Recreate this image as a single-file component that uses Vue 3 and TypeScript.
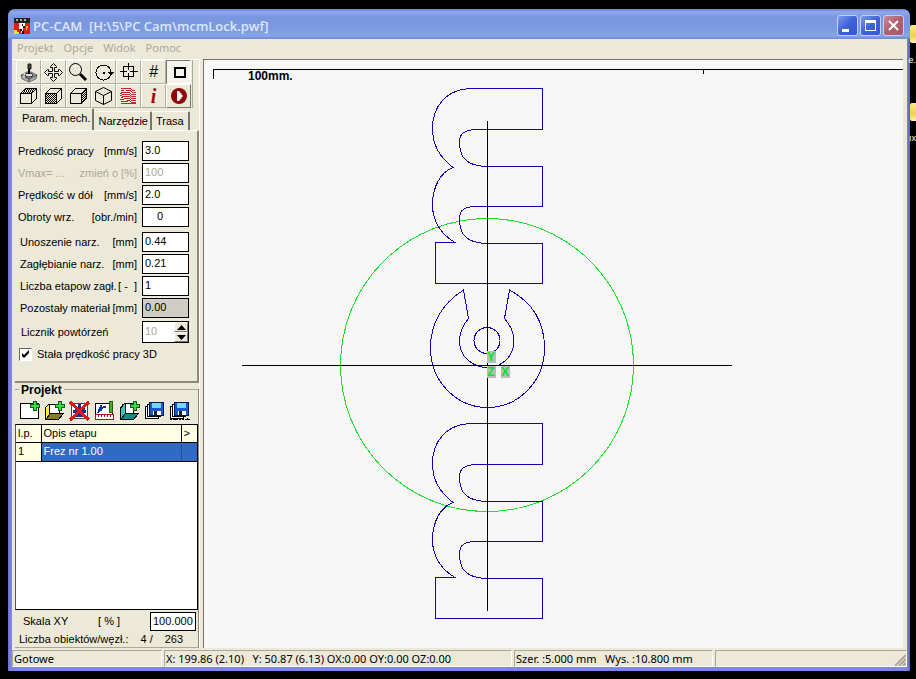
<script setup lang="ts">
import { ref } from 'vue'

interface Field {
  id: string
  label: string
  unit: string
  value: string
  state?: 'off' | 'locked'
  gap?: boolean
  centered?: boolean
}

const menus = ['Projekt', 'Opcje', 'Widok', 'Pomoc']
const tabs = ['Param. mech.', 'Narzędzie', 'Trasa']
const activeTab = ref(0)

const fields = ref<Field[]>([
  { id: 'work', label: 'Predkość pracy', unit: '[mm/s]', value: '3.0' },
  { id: 'vmax', label: 'Vmax= ...', unit: 'zmień o [%]', value: '100', state: 'off' },
  { id: 'down', label: 'Prędkość w dół', unit: '[mm/s]', value: '2.0' },
  { id: 'spin', label: 'Obroty wrz.', unit: '[obr./min]', value: '0', centered: true },
  { id: 'lift', label: 'Unoszenie narz.', unit: '[mm]', value: '0.44', gap: true },
  { id: 'sink', label: 'Zagłębianie narz.', unit: '[mm]', value: '0.21' },
  { id: 'steps', label: 'Liczba etapow zagł.', unit: '[ -  ]', value: '1' },
  { id: 'left', label: 'Pozostały materiał', unit: '[mm]', value: '0.00', state: 'locked' },
])
const repeats = ref(10)
const constantSpeed = ref(true)
const scale = ref('100.000')

const tools = [
  'Joystick', 'Przesuń', 'Lupa', 'Obrót', 'Centruj', 'Siatka', 'Obszar',
  'Widok z góry', 'Widok z przodu', 'Widok z boku', 'Izometria', 'Ścieżki', 'Informacje', 'Start',
]
const projectTools = ['Nowy', 'Otwórz', 'Usuń', 'Edytuj', 'Dodaj', 'Zapisz', 'Zapisz jako']

const letterM =
  'M542.5 88.5H473C445 88.5 432.5 108 432.5 128C432.5 146 440 157 453 167.5C441 172 432.5 186 432.5 205C432.5 222 442 235 455 242.5H435.5V283.5H542.5V243.5H487C468 243 459.5 236 459.5 219C459.5 209 465 206.5 478 206.5H542.5V166.5H487C468 166 459.5 159 459.5 142C459.5 132 467 129.5 478 129.5H542.5Z'
const letterC =
  'M463.5 290C448 300 430.5 318 430.5 348C430.5 382 457 407.5 487.5 407.5C518 407.5 544.5 382 544.5 348C544.5 318 528 300 509.5 290L504.5 318.5C510 325 514 333 514 341C514 356 502 367.5 487.5 367.5C472 367.5 459.5 356 459.5 341C459.5 333 463 325 468.5 318.5Z'
</script>

<template>
  <div class="desktop">
    <div class="shortcut first"><span class="folder"></span><span>e.</span></div>
    <div class="shortcut second"><span class="folder"></span><span>ıx</span></div>

    <main class="window">
      <header class="titlebar">
        <svg class="appicon" width="16" height="16" shape-rendering="crispEdges">
          <rect width="16" height="16" fill="#e81a10" />
          <rect width="16" height="5" fill="#222" />
          <path d="M2 1h2v2H2zM6 1h2v2H6zM10 1h2v2h-2z" fill="#aaa" />
          <path d="M5 5h6v4H9v6H7v-4H5z" fill="#fff" />
          <path d="M8 6h1v2H8zM9 8h2v2H9zM6 11h2v2H6zM8 13h2v3H8z" fill="#111" />
          <path d="M0 12h3v2h2v2H0z" fill="#ffe020" />
          <path d="M12 8h2v2h-1v2h-1z" fill="#ffb030" />
        </svg>
        <h1>PC-CAM&nbsp; [H:\5\PC Cam\mcmLock.pwf]</h1>
        <div class="winbuttons">
          <button aria-label="Minimalizuj"><svg width="19" height="19"><path d="M4 13h7v3H4z" fill="#fff" /></svg></button>
          <button aria-label="Maksymalizuj"><svg width="19" height="19" shape-rendering="crispEdges"><path d="M4 4h11v11H4zM5 7v7h9V7z" fill="#fff" fill-rule="evenodd" /></svg></button>
          <button class="close" aria-label="Zamknij"><svg width="19" height="19"><path d="M5 5l9 9M14 5l-9 9" stroke="#fff" stroke-width="2" /></svg></button>
        </div>
      </header>

      <nav class="menubar">
        <button v-for="m in menus" :key="m">{{ m }}</button>
      </nav>

      <div class="content">
        <aside class="sidebar">
          <div class="toolbar">
            <button v-for="(t, i) in tools" :key="t" :aria-label="t" :class="{ pressed: i === 6, held: i === 13 }">
              <span v-if="i === 5" class="hash">#</span>
              <span v-else-if="i === 12" class="info">i</span>
              <svg v-else width="23" height="22" fill="none" stroke="#000">
                <g v-if="i === 0">
                  <path d="M4 14l8-4 8 4-1 4-7 3-7-3z" fill="#aaa" stroke="#777" />
                  <path d="M4 14l8 4 8-4M12 18v3" stroke="#444" />
                  <ellipse cx="12" cy="14" rx="4" ry="2" fill="#ddd" stroke="#222" />
                  <path d="M12 13V7" stroke-width="2" />
                  <path d="M11 3h3v5h-3z" fill="#444" stroke="#222" />
                  <path d="M7 12l1 2M6 15l2 1" stroke="#fff" />
                </g>
                <path v-else-if="i === 1" d="M11.5 2.5l3 3v1h-2v4h4v-2h1l3 3-3 3h-1v-2h-4v4h2v1l-3 3-3-3v-1h2v-4h-4v2h-1l-3-3 3-3h1v2h4v-4h-2v-1z" />
                <g v-else-if="i === 2">
                  <circle cx="8.500" cy="8.500" r="6" />
                  <path d="M5 8q1-3 4-3" stroke="#fff" />
                  <path d="M13 13l6 6" stroke-width="3" />
                </g>
                <g v-else-if="i === 3" shape-rendering="crispEdges">
                  <circle cx="11.500" cy="11.500" r="7.500" />
                  <path d="M11 11h2v2h-2z" fill="#000" stroke="none" />
                  <path d="M16 11h6l-3 4z" fill="#000" stroke="none" />
                </g>
                <g v-else-if="i === 4" shape-rendering="crispEdges">
                  <rect x="6.500" y="5.500" width="10" height="10" />
                  <path d="M11.500 2v7M11.500 12v7M3 10.500h7M13 10.500h8" />
                </g>
                <rect v-else-if="i === 6" x="8" y="7" width="10" height="9" stroke-width="2" shape-rendering="crispEdges" />
                <g v-else-if="i >= 7 && i <= 9" shape-rendering="crispEdges">
                  <path v-if="i === 7" d="M7 6.500h10M8 4.500h10M6 7.500h10M7 5.500h10" stroke-dasharray="1 1" />
                  <path v-if="i === 8" d="M4 9.500h10M5 10.500h9M4 11.500h10M5 12.500h9M4 13.500h10M5 14.500h9M4 15.500h10M5 16.500h9M4 17.500h10" stroke-dasharray="1 1" />
                  <path v-if="i === 9" d="M15.500 8v10M16.500 7v10M17.500 6v10M18.500 5v10" stroke-dasharray="1 1" />
                  <path d="M3.500 8.500h11v10h-11zM3.500 8.500l5-5h11l-5 5M19.500 3.500v10l-5 5" />
                </g>
                <path v-else-if="i === 10" d="M11.500 2.500l8 4v9l-8 4-8-4v-9zM3.500 6.500l8 4 8-4M11.500 10.500v9" />
                <g v-else-if="i === 11" stroke="#c0282c" shape-rendering="crispEdges">
                  <path d="M4 3.500h9l3 2h2M4 5.500h3M9 5.500h4l3 2h3M3 8.500l3-1h6l3 2h4M3 10.500l4-1h5l3 2h4M4 12.500l3-1h5l3 2h4M3 14.500h3l2-1h4l3 2h4M4 16.500h5l3-1 3 2h4M4 18.500h15" />
                </g>
                <g v-else-if="i === 13">
                  <circle cx="12" cy="11" r="8" fill="#8e0808" stroke="none" />
                  <path d="M10 6h2l4 5-4 5h-2z" fill="#fff" stroke="none" />
                </g>
              </svg>
            </button>
          </div>

          <div class="tabs" role="tablist">
            <button v-for="(t, i) in tabs" :key="t" role="tab" :aria-selected="i === activeTab" :class="{ active: i === activeTab }" @click="activeTab = i">{{ t }}</button>
          </div>

          <section class="tabpage">
            <div v-for="(f, i) in fields" :key="f.id" class="row" :class="[f.state, { gap: f.gap, indent: i > 3 }]">
              <label :for="f.id">{{ f.label }}</label>
              <span class="unit">{{ f.unit }}</span>
              <input :id="f.id" v-model="f.value" type="text" :disabled="f.state === 'off'" :readonly="f.state === 'locked'" :class="{ centered: f.centered }" />
            </div>
            <div class="row off repeat">
              <label for="repeat">Licznik powtórzeń</label>
              <div class="spinner">
                <input id="repeat" :value="repeats" type="text" disabled />
                <div class="arrows">
                  <button aria-label="Więcej" @click="repeats++"><svg width="9" height="5"><path d="M0 5l4.500-5 4.500 5z" /></svg></button>
                  <button aria-label="Mniej" @click="repeats--"><svg width="9" height="5"><path d="M0 0h9l-4.500 5z" /></svg></button>
                </div>
              </div>
            </div>
            <label class="check">
              <input v-model="constantSpeed" type="checkbox" />
              <svg width="11" height="11"><path v-if="constantSpeed" d="M2 4v3l2 2 5-5V1L4 6z" /></svg>
              <span>Stała prędkość pracy 3D</span>
            </label>
          </section>

          <section class="project">
            <h2>Projekt</h2>
            <div class="ptools">
              <button v-for="(t, i) in projectTools" :key="t" :aria-label="t">
                <svg width="21" height="22" stroke="#000" fill="none" shape-rendering="crispEdges">
                  <path v-if="i === 0" d="M1.500 3.500h18v15h-18z" fill="#fff" />
                  <g v-else-if="i === 1">
                    <path d="M1.500 19.500v-12l3-3h8v13z" fill="#ffe650" />
                    <path d="M5.500 4.500h10v12h-10z" fill="#fff" />
                    <path d="M1.500 19.500l5-6h13l-5 6z" fill="#84801a" />
                  </g>
                  <g v-else-if="i === 2">
                    <path d="M2.500 3.500h16v15h-16z" fill="#fff" stroke="#444" />
                    <path d="M9 4h3v3h4v3h1v3h-3v4H7v-4H4v-3h2V7h3z" fill="#1d2d98" stroke="none" />
                    <path d="M1 2l19 18M20 2L1 20" stroke="#e01818" stroke-width="3" />
                  </g>
                  <g v-else-if="i === 3">
                    <path d="M1.500 3.500h17v11h-17z" fill="#fff" />
                    <path d="M4 13l2-5 6-1M7 5v6" stroke="#1530b0" stroke-width="2" />
                    <path d="M15 1h3v11h-3z" fill="#48b020" stroke="#286010" />
                    <path d="M1.500 14.500h18v5h-18z" fill="#fff" stroke="#a01818" />
                    <path d="M4.500 15v2M7.500 15v2M10.500 15v2M13.500 15v2M16.500 15v2" stroke="#a01818" />
                  </g>
                  <g v-else-if="i === 4">
                    <path d="M1.500 19.500v-12l2-1V5l3-2h7v14z" fill="#38c8c0" />
                    <path d="M6.500 3.500h8v13h-8z" fill="#fff" />
                    <path d="M1.500 19.500l5-6h13l-5 6z" fill="#108c90" />
                  </g>
                  <g v-else>
                    <path d="M1.500 6.500h13v12h-13z" fill="#fff" />
                    <path d="M3.500 4.500h13v12h-13z" fill="#fff" />
                    <path d="M5.500 2.500h14v13h-14z" fill="#1858d0" stroke="#08184c" />
                    <path d="M8 3h9v5H8z" fill="#78d4ff" stroke="none" />
                    <path d="M9 11h8v4H9z" fill="#fff" stroke="none" />
                    <path d="M10 11h3v4h-3z" fill="#123" stroke="none" />
                    <path v-if="i === 6" d="M1 19.500h20M2.500 18v3M6.500 18v3M10.500 18v3M14.500 18v3M18.500 18v3" stroke-dasharray="2 1" />
                  </g>
                  <path v-if="[0, 1, 4].includes(i)" d="M14 1h4v3h3v4h-3v3h-4V8h-3V4h3z" fill="#0a5a1a" stroke="none" />
                  <path v-if="[0, 1, 4].includes(i)" d="M15 2h2v3h3v2h-3v3h-2V7h-3V5h3z" fill="#30e040" stroke="none" />
                </svg>
              </button>
            </div>
            <div class="list">
              <table>
                <thead>
                  <tr><th class="num">l.p.</th><th>Opis etapu</th><th class="more">&gt;</th></tr>
                </thead>
                <tbody>
                  <tr><td class="num">1</td><td>Frez nr 1.00</td><td class="more"></td></tr>
                </tbody>
              </table>
            </div>
            <div class="scale">
              <label for="scale">Skala XY</label>
              <span>[ % ]</span>
              <input id="scale" v-model="scale" type="text" />
            </div>
            <div class="count"><span>Liczba obiektów/węzł.:</span><span>4 /</span><span>263</span></div>
          </section>
        </aside>

        <section class="canvas">
          <svg width="100%" height="100%" fill="none">
            <path d="M9.500 19V9.500M499.500 9v5" stroke="#000" />
            <line x1="9" y1="9.500" x2="100%" y2="9.500" stroke="#000" />
            <text x="44" y="20" class="ruler">100mm.</text>
            <g transform="translate(-204 -60)" shape-rendering="crispEdges">
              <circle cx="487" cy="365" r="146.500" stroke="#1fdc2c" />
              <g stroke="#1400b4">
                <path :d="letterM" />
                <path :d="letterC" />
                <path :d="letterM" transform="translate(0 335)" />
                <circle cx="487" cy="340.500" r="13" />
              </g>
              <path d="M242 365.500h490M487.500 121v490" stroke="#000" />
              <path d="M487 351h9v12h-9zM487 366h9v12h-9zM501 366h9v12h-9z" fill="#bcbcbc" />
              <g class="axis">
                <text x="491" y="361">Y</text>
                <text x="491" y="376">Z</text>
                <text x="505" y="376">X</text>
              </g>
            </g>
          </svg>
        </section>
      </div>

      <footer class="status">
        <div class="ready">Gotowe</div>
        <div class="coords">X: 199.86 (2.10)&nbsp;&nbsp; Y: 50.87 (6.13) OX:0.00 OY:0.00 OZ:0.00</div>
        <div class="size">Szer. :5.000 mm&nbsp;&nbsp; Wys. :10.800 mm</div>
        <div class="rest">
          <svg width="12" height="12" stroke="#aaa690" stroke-width="2"><path d="M1 12L12 1M5 12l7-7M9 12l3-3" /></svg>
        </div>
      </footer>
    </main>
  </div>
</template>

<style>
body {
  background: #000;
}
</style>

<style scoped>
* {
  box-sizing: border-box;
}
.desktop {
  position: relative;
  display: flex;
  min-height: 100vh;
  padding: 9px 6px 8px 8px;
  overflow: hidden;
  background: #000;
  color: #000;
  font: 11px/14px "Liberation Sans", Arial, sans-serif;
}
button,
input {
  margin: 0;
  padding: 0;
  border: 0;
  background: none;
  color: inherit;
  font: inherit;
}
button svg {
  display: block;
}
.shortcut {
  position: absolute;
  right: 0;
  display: flex;
  flex-direction: column;
  align-items: flex-end;
  gap: 10px;
  color: #fff;
  font-size: 9px;
}
.shortcut.first {
  top: 25px;
}
.shortcut.second {
  top: 103px;
}
.folder {
  width: 6px;
  height: 18px;
  border-radius: 2px 0 0 2px;
  background: linear-gradient(#ffe98a, #f3cf52 60%, #fff3b0);
}
.window {
  display: flex;
  flex: 1;
  flex-direction: column;
  min-width: 0;
  padding: 0 3px 4px 4px;
  border-radius: 7px 7px 0 0;
  background: linear-gradient(90deg, #6c74d4, #7d86e0 3px, #7d86e0 calc(100% - 3px), #5a5cc0);
}
.titlebar {
  display: flex;
  align-items: center;
  gap: 3px;
  height: 30px;
  margin: 0 -3px 0 -4px;
  padding: 3px 6px 0;
  border-radius: 7px 7px 0 0;
  background: linear-gradient(#6b80cf, #8ea9ec 3px, #7a96df 8px, #7d99e1 20px, #87a5ea 27px, #6b86cc);
}
h1 {
  flex: 1;
  margin: 0;
  color: #dce6fb;
  font: 600 13px/18px "Open Sans", sans-serif;
}
.winbuttons {
  display: flex;
  gap: 2px;
}
.winbuttons button {
  width: 21px;
  height: 21px;
  border: 1px solid #c3d0f5;
  border-radius: 3px;
  background: linear-gradient(135deg, #7c9af0, #3e62d8 50%, #3558c8);
}
.winbuttons .close {
  background: linear-gradient(135deg, #c98a9c, #b05f70 50%, #a8586a);
}
.menubar {
  display: flex;
  gap: 10px;
  height: 18px;
  padding-left: 5px;
  background: #ece9d8;
  color: #aca899;
  font: 11px/18px "Noto Sans", sans-serif;
}
.content {
  display: flex;
  flex: 1;
  gap: 3px;
  padding: 2px 4px 1px 0;
  background: #ece9d8;
}
.sidebar {
  display: flex;
  flex-direction: column;
  width: 188px;
  padding-left: 3px;
  border-top: 1px solid #fff;
  border-right: 1px solid #fff;
}
.toolbar {
  display: grid;
  grid-template-columns: repeat(7, 25px);
  grid-auto-rows: 24px;
  width: 178px;
  padding-left: 1px;
  border-right: 1px solid #aca899;
}
.toolbar button {
  border: 1px solid;
  border-color: #fff #b4b09e #b4b09e #fff;
}
.toolbar .pressed {
  border-color: #777 #fff #fff #777;
  background: #f4f3ec;
}
.toolbar .held {
  border-color: #fff #777 #777 #fff;
}
.hash {
  font: italic 16px/20px "Liberation Sans", sans-serif;
}
.info {
  color: #9a0c0c;
  font: italic bold 20px/20px "Liberation Serif", serif;
}
.tabs {
  display: flex;
  align-items: flex-end;
  height: 22px;
}
.tabs button {
  height: 19px;
  padding: 0 2px 0 4px;
  border-top: 1px solid #fff;
  border-right: 2px solid #77756a;
  border-radius: 2px 2px 0 0;
  white-space: nowrap;
}
.tabs button:last-child {
  padding: 0 4px;
}
.tabs .active {
  height: 22px;
  padding: 0 2px 4px 7px;
}
.tabpage {
  display: flex;
  flex-direction: column;
  height: 253px;
  padding: 9px 8px 0 3px;
  border-top: 1px solid #fff;
  border-right: 2px solid #8c897b;
  border-bottom: 2px solid #8c897b;
}
.row {
  display: flex;
  align-items: center;
  height: 22px;
}
.row.gap {
  margin-top: 3px;
}
.row.indent {
  padding-left: 2px;
}
.row label {
  flex: 1;
  white-space: nowrap;
}
.unit {
  padding-right: 5px;
  white-space: pre;
}
.row > input,
.spinner {
  width: 47px;
  height: 20px;
  border: 1px solid #000;
  background: #fff;
}
.row > input {
  padding: 0 2px 2px;
}
.row > .centered {
  padding-left: 14px;
}
.off,
.off input {
  color: #aca899;
}
.row.repeat {
  margin-top: 2px;
}
.repeat label {
  padding-left: 3px;
  color: #000;
}
.locked input {
  background: #d0ccc6;
}
.spinner {
  display: flex;
  height: 22px;
}
.spinner input {
  flex: 1;
  width: 20px;
  padding: 0 2px 2px;
}
.arrows {
  display: flex;
  flex-direction: column;
  width: 14px;
  background: #ece9d8;
}
.arrows button {
  display: flex;
  flex: 1;
  align-items: center;
  justify-content: center;
  border: 1px solid;
  border-color: #fff #777 #777 #fff;
}
.check {
  position: relative;
  display: flex;
  align-items: center;
  gap: 5px;
  height: 20px;
  margin-top: 1px;
  padding-left: 1px;
}
.check input {
  position: absolute;
  width: 13px;
  height: 13px;
  opacity: 0;
}
.check svg {
  width: 13px;
  height: 13px;
  border: 1px solid;
  border-color: #666 #fff #fff #666;
  background: #fff;
}
.project {
  display: flex;
  flex: 1;
  flex-direction: column;
  margin-top: 6px;
  border-top: 1px solid #aca899;
  border-right: 1px solid #8c897b;
}
h2 {
  align-self: flex-start;
  margin: -7px 0 0 4px;
  padding: 0 2px;
  background: #ece9d8;
  font: bold 12px/14px "Liberation Sans", sans-serif;
}
.ptools {
  display: flex;
  gap: 4px;
  padding: 3px 0 2px 4px;
}
.list {
  flex: 1;
  border: 1px solid #000;
  border-left-color: #555;
  background: #fff;
}
table {
  width: 100%;
  border-collapse: collapse;
  table-layout: fixed;
}
th,
td {
  height: 17px;
  padding: 0 2px;
  border-right: 1px solid #000;
  border-bottom: 1px solid #000;
  font-weight: normal;
  line-height: 16px;
  text-align: left;
}
th,
td.num {
  background: #ffffe3;
}
td {
  height: 19px;
  padding-bottom: 2px;
  border-right-color: #24508c;
  background: #316ac5;
  color: #fff;
}
td.num {
  border-right-color: #000;
  color: #000;
}
.num {
  width: 25px;
}
.more {
  width: 16px;
}
th.more,
td.more {
  border-right: 0;
}
.scale {
  display: flex;
  align-items: center;
  justify-content: space-between;
  height: 21px;
  padding: 1px 2px 0 8px;
}
.scale input {
  width: 46px;
  height: 19px;
  padding: 0 2px;
  border: 1px solid #000;
  background: #fff;
}
.count {
  display: flex;
  gap: 12px;
  height: 17px;
  padding: 1px 0 0 4px;
  border-bottom: 1px solid #aca899;
}
.canvas {
  display: flex;
  flex: 1;
  min-width: 0;
  border-top: 1px solid #77756a;
  border-left: 1px solid #77756a;
  background: #f7f7f7;
}
.canvas svg {
  flex: 1;
  min-width: 0;
}
.ruler {
  fill: #000;
  font: bold 12px "Liberation Sans", sans-serif;
}
.axis {
  fill: #00e81c;
  font: bold 12px "Liberation Sans", sans-serif;
  text-anchor: middle;
}
.status {
  display: flex;
  gap: 2px;
  height: 18px;
  padding-top: 1px;
  background: #ece9d8;
  font: 11px/16px "Noto Sans", sans-serif;
  white-space: nowrap;
}
.status div {
  overflow: hidden;
  padding-left: 1px;
  border: 1px solid;
  border-color: #aca899 #fff #fff #aca899;
}
.ready {
  width: 150px;
}
.coords {
  width: 348px;
}
.size {
  width: 199px;
}
.rest {
  display: flex;
  flex: 1;
  align-items: flex-end;
  justify-content: flex-end;
}
</style>
